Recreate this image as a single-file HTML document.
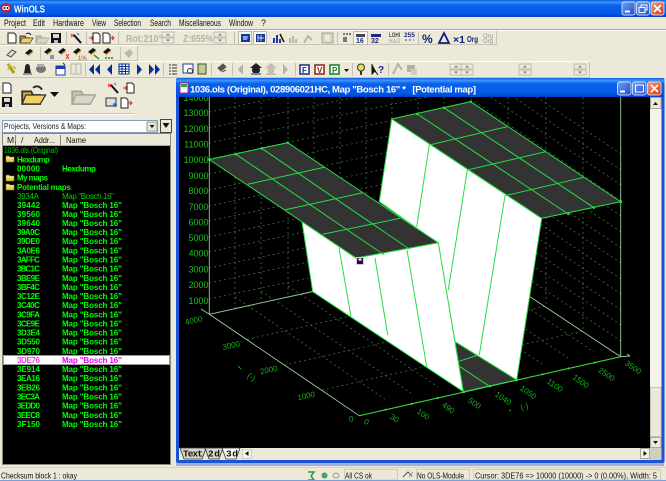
<!DOCTYPE html>
<html><head><meta charset="utf-8"><title>WinOLS</title>
<style>
html,body{margin:0;padding:0;background:#ece9d8;width:666px;height:481px;overflow:hidden}
svg{display:block;font-family:"Liberation Sans",sans-serif}
.l{font-size:8px;fill:#0f0;font-weight:bold;letter-spacing:.1px}
.n{font-size:8px;fill:#0c0}
.m{font-size:9px;fill:#111}
.v{font-size:9px;fill:#17c617}
.f{font-size:8px;fill:#17b017;text-anchor:middle}
.s{font-size:8.5px;fill:#111}
</style></head><body>
<svg width="666" height="481" viewBox="0 0 666 481" xmlns="http://www.w3.org/2000/svg">
<defs>
<linearGradient id="tb" x1="0" y1="0" x2="0" y2="1"><stop offset="0" stop-color="#0a5ae0"/><stop offset=".12" stop-color="#3d95ff"/><stop offset=".3" stop-color="#0a62ec"/><stop offset=".8" stop-color="#0058e6"/><stop offset="1" stop-color="#0040c8"/></linearGradient>
<linearGradient id="cb" x1="0" y1="0" x2="1" y2="1"><stop offset="0" stop-color="#f09a80"/><stop offset="1" stop-color="#d23c18"/></linearGradient>
<linearGradient id="bb" x1="0" y1="0" x2="1" y2="1"><stop offset="0" stop-color="#6d9cf5"/><stop offset="1" stop-color="#1f4fd0"/></linearGradient>
<clipPath id="plot"><rect x="179" y="97" width="471" height="351"/></clipPath>
<g id="doc"><path d="M-4-5H2L4-3V5H-4Z" fill="#fff" stroke="#222"/></g>
<g id="open"><path d="M-6-2H-1L0 0H4V5H-6Z" fill="#c8a838" stroke="#333"/><path d="M-6 5L-4 0H7L4 5Z" fill="#f0d060" stroke="#333" stroke-width=".7"/><path d="M0-4Q3-6 5-3" fill="none" stroke="#222"/></g>
<g id="gopen"><path d="M-6-2H-1L0 0H4V5H-6Z" fill="#c8c6b8" stroke="#a5a396"/><path d="M-6 5L-4 0H7L4 5Z" fill="#d8d6c8" stroke="#a5a396" stroke-width=".7"/></g>
<g id="save"><rect x="-5" y="-5" width="10" height="10" fill="#111"/><rect x="-3" y="-4" width="6" height="4" fill="#d8d8d8"/><rect x="-2" y="2" width="4" height="3" fill="#bbb"/></g>
<g id="wand"><path d="M-2-3L5 5" stroke="#111" stroke-width="2"/><path d="M-5-1L-2-4M-5-4L-2-1" stroke="#d33" stroke-width="1"/><path d="M1-5L3-3" stroke="#28b" stroke-width="1.2"/></g>
<g id="nl"><path d="M-2-5H3L5-3V5H-2Z" fill="#fff" stroke="#222"/><path d="M-6 0H-1M-3-2V2" stroke="#c33" stroke-width="1"/></g>
<g id="nr"><path d="M-5-5H0L2-3V5H-5Z" fill="#fff" stroke="#222"/><path d="M2 0H6M4-2L6 0L4 2" stroke="#c33" fill="none"/></g>
<g id="k"><path d="M-5 1L0-3L3-1L-2 3Z" fill="#111"/><path d="M-2 4L3 0" stroke="#d8b040" stroke-width="1.2"/></g>
<g id="spin"><rect x="-6" y="-6" width="12" height="5" fill="#ece9d8" stroke="#aaa69a" stroke-width=".6"/><rect x="-6" y="0" width="12" height="5" fill="#ece9d8" stroke="#aaa69a" stroke-width=".6"/><path d="M-2-2.5H2L0-4.5ZM-2 1.5H2L0 3.5Z" fill="#777"/></g>
<g id="fold"><path d="M-4-3H-1L0-2H4V3H-4Z" fill="#e8d040" stroke="#8a7a20" stroke-width=".6"/><path d="M-4-1H4" stroke="#fff" stroke-width=".8"/></g>
</defs>
<rect width="666" height="481" fill="#ece9d8"/>

<!-- main title -->
<rect width="666" height="17" fill="url(#tb)"/>
<circle cx="6" cy="8" r="5" fill="#c02040"/><circle cx="4.5" cy="8" r="2" fill="#fff"/><circle cx="7.5" cy="8" r="2" fill="#fff"/><circle cx="4.5" cy="8" r="1" fill="#222"/><circle cx="7.5" cy="8" r="1" fill="#222"/>
<text x="14" y="12.5" font-size="10.5" font-weight="bold" fill="#fff" textLength="31" lengthAdjust="spacingAndGlyphs">WinOLS</text>
<rect x="622" y="2" width="13" height="13" rx="2" fill="url(#bb)" stroke="#fff" stroke-width=".7"/><rect x="625" y="10.5" width="5" height="2" fill="#fff"/>
<rect x="636.5" y="2" width="13" height="13" rx="2" fill="url(#bb)" stroke="#fff" stroke-width=".7"/><rect x="641" y="5" width="6" height="5" fill="none" stroke="#fff"/><rect x="639" y="7.5" width="6" height="5" fill="#3f6fe0" stroke="#fff"/>
<rect x="651" y="2" width="13" height="13" rx="2" fill="url(#cb)" stroke="#fff" stroke-width=".7"/><path d="M654 5L661 12M661 5L654 12" stroke="#fff" stroke-width="1.6"/>

<!-- menu -->
<g>
<text class="m" x="4" y="26" textLength="22" lengthAdjust="spacingAndGlyphs">Project</text>
<text class="m" x="33" y="26" textLength="12" lengthAdjust="spacingAndGlyphs">Edit</text>
<text class="m" x="53" y="26" textLength="31" lengthAdjust="spacingAndGlyphs">Hardware</text>
<text class="m" x="92" y="26" textLength="14" lengthAdjust="spacingAndGlyphs">View</text>
<text class="m" x="114" y="26" textLength="27" lengthAdjust="spacingAndGlyphs">Selection</text>
<text class="m" x="150" y="26" textLength="21" lengthAdjust="spacingAndGlyphs">Search</text>
<text class="m" x="179" y="26" textLength="42" lengthAdjust="spacingAndGlyphs">Miscellaneous</text>
<text class="m" x="229" y="26" textLength="24" lengthAdjust="spacingAndGlyphs">Window</text>
<text class="m" x="261" y="26">?</text>
</g>
<path d="M0 30.5H666" stroke="#fff"/><path d="M0 29.5H666" stroke="#aca899"/>
<path d="M0 45.5H137M0 61.5H590" stroke="#fff"/><path d="M0 44.5H496M0 60.5H137" stroke="#c8c5b4"/><path d="M0 77.5H590" stroke="#c8c5b4"/>
<path d="M496.5 31V45M137.5 46V61M589.5 62V77" stroke="#c8c5b4"/>

<!-- toolbar row 1 -->
<use href="#doc" x="12" y="38"/><use href="#open" x="26" y="38"/><use href="#gopen" x="42" y="38"/><use href="#save" x="56" y="38"/><use href="#wand" x="76" y="38"/><use href="#nl" x="95" y="38"/><use href="#nr" x="108" y="38"/>
<path d="M66.5 32V44M86.5 32V44M118.5 32V44M234.5 32V44M337.5 32V44M418.5 32V44" stroke="#c4c1b0"/>
<text x="126" y="42" font-size="10" font-weight="bold" fill="#b5b2a5" textLength="36" lengthAdjust="spacingAndGlyphs">Rot:210°</text><use href="#spin" x="168" y="38"/>
<text x="183" y="42" font-size="10" font-weight="bold" fill="#b5b2a5" textLength="30" lengthAdjust="spacingAndGlyphs">Z:655%</text><use href="#spin" x="220" y="38"/>
<rect x="238.5" y="31.5" width="13" height="13" fill="#f6f5ee" stroke="#bdbaa8"/><rect x="241" y="34" width="9" height="8" fill="#123a96"/><path d="M243 36H248L247 40H243Z" fill="#7aa8e0"/>
<rect x="253.5" y="31.5" width="13" height="13" fill="#f6f5ee" stroke="#bdbaa8"/><rect x="256" y="34" width="9" height="8" fill="#123a96"/><path d="M258 35V41M261 35V41M258 38H264" stroke="#cde" stroke-width="1"/>
<path d="M273 43V38H275V43ZM276 43V35H278V43ZM279 43V39H281V43Z" fill="#1c3aa8"/><path d="M280 34L284 42" stroke="#111" stroke-width="1.5"/>
<path d="M289 43V38H291V43ZM292 43V36H294V43ZM295 43V39H297V43Z" fill="#b8b6a6"/><path d="M304 43L308 36L312 40" stroke="#b8b6a6" stroke-width="2" fill="none"/>
<rect x="322" y="33" width="11" height="10" fill="#d6d4c4" stroke="#aaa69a"/><path d="M325 35H330V41H325Z" fill="#ece9d8"/>
<path d="M343 33h2v2h-2zM346 33h2v2h-2zM349 33h2v2h-2zM343 37h4v5h-4z" fill="#777"/>
<rect x="353.5" y="31.5" width="14" height="13" fill="#f6f5ee" stroke="#bdbaa8"/>
<path d="M356 34h9v3h-9z" fill="#445"/><text x="356" y="43" font-size="7" font-weight="bold" fill="#1c2a80">16</text>
<path d="M371 34h10v3h-10z" fill="#1c2a80"/><text x="371" y="43" font-size="7" font-weight="bold" fill="#1c2a80">32</text>
<text x="389" y="37" font-size="6" font-weight="bold" fill="#444" textLength="11" lengthAdjust="spacingAndGlyphs">LOHI</text><text x="389" y="43" font-size="6" fill="#999" textLength="11" lengthAdjust="spacingAndGlyphs">HILO</text>
<text x="404" y="37" font-size="6.5" font-weight="bold" fill="#1c2a80">255</text><path d="M405 40H414" stroke="#999" stroke-dasharray="2 2" stroke-width="2"/>
<text x="422" y="43" font-size="12" font-weight="bold" fill="#0b1f80">%</text>
<path d="M444 33L449 43H439Z" fill="none" stroke="#0b1f80" stroke-width="1.8"/>
<text x="453" y="43" font-size="10" font-weight="bold" fill="#0b1f80" textLength="12" lengthAdjust="spacingAndGlyphs">×1</text>
<text x="467" y="42" font-size="8.5" font-weight="bold" fill="#0b1f80" textLength="11" lengthAdjust="spacingAndGlyphs">Org</text>
<text x="483" y="38" font-size="6" fill="#999">Org</text><text x="483" y="43" font-size="6" fill="#999">Org</text>

<!-- toolbar row 2 -->
<path d="M7 55L12 50L16 52L11 57Z" fill="#ddd" stroke="#555"/>
<use href="#k" x="30" y="52"/>
<use href="#k" x="49" y="51"/><path d="M50 56h4M50 58h4" stroke="#1c3aa8"/>
<use href="#k" x="63" y="51"/><path d="M66 54L69 59M69 54L66 59" stroke="#d33"/>
<use href="#k" x="78" y="51"/><text x="78" y="60" font-size="6" fill="#c33">1%</text>
<use href="#k" x="93" y="51"/><path d="M94 55L99 59" stroke="#281" stroke-width="1.3"/>
<use href="#k" x="108" y="51"/><path d="M105 58H113" stroke="#281" stroke-width="1.5" stroke-dasharray="2 1"/>
<path d="M124 53L130 49L133 53L129 58Z" fill="#bcb9aa"/>
<path d="M40.5 47V60M120.5 47V60" stroke="#c4c1b0"/>

<!-- toolbar row 3 -->
<path d="M8 64L14 73" stroke="#a8a020" stroke-width="3"/><path d="M8 70L10 64M13 66L16 69" stroke="#c8c030" stroke-width="1.5"/>
<path d="M24 73H31L30 68Q30 64 27.5 64Q25 64 25 68Z" fill="#222"/><rect x="23" y="73" width="9" height="2" fill="#a88"/>
<ellipse cx="41" cy="69" rx="5" ry="4" fill="#777"/><rect x="37" y="64" width="7" height="3" fill="#aaa"/>
<rect x="56" y="66" width="9" height="9" fill="#fff" stroke="#1c3aa8"/><rect x="56" y="66" width="9" height="3" fill="#1c3aa8"/><path d="M63 63L65 65" stroke="#333"/>
<rect x="71" y="64" width="10" height="10" fill="none" stroke="#b5b3a4"/><path d="M76 64V74" stroke="#b5b3a4"/>
<path d="M94 64L89 69.5L94 75ZM100 64L95 69.5L100 75Z" fill="#0b2f90"/>
<path d="M112 64L107 69.5L112 75Z" fill="#0b2f90"/>
<rect x="119" y="64" width="10" height="10" fill="#fff" stroke="#0b2f90"/><path d="M119 66.5H129M119 69H129M119 71.5H129M122 64V74M125.5 64V74" stroke="#0b2f90"/>
<path d="M137 64L142 69.5L137 75Z" fill="#0b2f90"/>
<path d="M149 64L154 69.5L149 75ZM155 64L160 69.5L155 75Z" fill="#0b2f90"/>
<path d="M169 65h2M172 65h5M169 68h2M172 68h5M169 71h2M172 71h5M169 74h2M172 74h5" stroke="#333"/>
<rect x="183" y="64" width="10" height="9" fill="#fff" stroke="#1c3aa8"/><circle cx="190" cy="71" r="2.5" fill="none" stroke="#333"/>
<rect x="198" y="64" width="8" height="10" fill="#c8c8a0" stroke="#2a5a2a"/>
<path d="M218 68L223 64L226 67L221 71ZM222 72L226 70" fill="#555" stroke="#555"/>
<path d="M85.5 63V76M163.5 63V76M211.5 63V76M232.5 63V76M295.5 63V76M352.5 63V76M388.5 63V76" stroke="#c4c1b0"/>
<path d="M243 64L238 69.5L243 75Z" fill="#b5b3a4"/>
<path d="M250 68L256 63L262 68Z" fill="#222"/><circle cx="256" cy="70" r="3.5" fill="#123" stroke="#222"/><rect x="251" y="73" width="10" height="2" fill="#888"/>
<path d="M265 68L271 63L277 68Z" fill="#c4c1b0"/><circle cx="271" cy="70" r="3.5" fill="#c4c1b0"/><rect x="266" y="73" width="10" height="2" fill="#c4c1b0"/>
<path d="M283 64L288 69.5L283 75Z" fill="#b5b3a4"/>
<rect x="300" y="65" width="9" height="9" fill="#fff" stroke="#1c2a80" stroke-width="1.5"/><text x="302" y="73" font-size="8" font-weight="bold" fill="#1c2a80">F</text>
<rect x="315" y="65" width="9" height="9" fill="#fff" stroke="#8a2010" stroke-width="1.5"/><text x="317" y="73" font-size="8" font-weight="bold" fill="#8a2010">V</text>
<rect x="330" y="65" width="9" height="9" fill="#fff" stroke="#1a7a20" stroke-width="1.5"/><text x="332" y="73" font-size="8" font-weight="bold" fill="#1a7a20">P</text>
<path d="M344 69H349L346.5 72Z" fill="#111"/>
<circle cx="361" cy="67.5" r="3.5" fill="#e8e050" stroke="#333"/><path d="M361 71V75" stroke="#333" stroke-width="2"/>
<path d="M372 64V74L375 71L378 75" fill="#111" stroke="#111"/><text x="378" y="73" font-size="10" font-weight="bold" fill="#1c2a80">?</text>
<path d="M393 74L398 64L402 70" stroke="#b5b3a4" stroke-width="2" fill="none"/><rect x="407" y="65" width="8" height="7" fill="#b5b3a4"/><rect x="411" y="69" width="6" height="6" fill="#cfcdbc"/>
<use href="#spin" x="456" y="70"/><use href="#spin" x="467" y="70"/><use href="#spin" x="525" y="70"/><use href="#spin" x="580" y="70"/>

<!-- left panel toolbar -->
<use href="#doc" x="7" y="88"/><use href="#save" x="7" y="102"/>
<g transform="translate(33,95) scale(1.8)"><use href="#open"/></g>
<path d="M50 92H59L54.5 97Z" fill="#111"/>
<g transform="translate(83,95) scale(1.8)"><use href="#gopen"/></g>
<use href="#wand" x="113" y="88"/><use href="#nl" x="129" y="88"/>
<rect x="106" y="98" width="10" height="8" fill="#ddd" stroke="#333"/><circle cx="115" cy="105" r="2" fill="#2868b8"/><use href="#nr" x="126" y="103"/>
<path d="M0 113.5H134" stroke="#c8c5b4"/><path d="M0 114.5H134" stroke="#fff"/>
<rect x="2.5" y="120.5" width="155" height="12" fill="#fff" stroke="#7f9db9"/>
<text x="4" y="129" font-size="8.5" fill="#222" textLength="82" lengthAdjust="spacingAndGlyphs">Projects, Versions &amp; Maps:</text>
<rect x="147" y="122" width="10" height="9" fill="#e8e6d8" stroke="#999"/><path d="M149.5 125H154.5L152 128Z" fill="#111"/>
<rect x="160.5" y="119.5" width="11" height="13" fill="#ece9d8" stroke="#444"/><path d="M162.5 123H169.5L166 128Z" fill="#111"/>
<rect x="3" y="134" width="167" height="12" fill="#ece9d8"/>
<path d="M3 145.5H170" stroke="#aca899"/><path d="M15.5 135V145M60.5 135V145" stroke="#8a8878"/>
<text class="s" x="7" y="143">M.</text><text class="s" x="21" y="143">/</text><text class="s" x="34" y="143" textLength="21" lengthAdjust="spacingAndGlyphs">Addr...</text><text class="s" x="66" y="143" textLength="20" lengthAdjust="spacingAndGlyphs">Name</text>

<!-- list -->
<rect x="3" y="146" width="167" height="318" fill="#000"/>
<rect x="2.5" y="133.5" width="168" height="331" fill="none" stroke="#8a8878"/>
<rect x="3" y="355.5" width="167" height="9.5" fill="#fff"/><rect x="3.5" y="355.5" width="166" height="9" fill="none" stroke="#999"/>
<text class="n" x="4" y="153" textLength="54" lengthAdjust="spacingAndGlyphs">1036.ols (Original)</text>
<use href="#fold" x="10" y="159"/><use href="#fold" x="10" y="178"/><use href="#fold" x="10" y="187"/>
<text class="l" x="17" y="162.5" textLength="33">Hexdump</text>
<text class="l" x="17" y="171.5" textLength="23">00000</text><text class="l" x="62" y="171.5" textLength="34">Hexdump</text>
<text class="l" x="17" y="180.5" textLength="31">My maps</text>
<text class="l" x="17" y="190" textLength="54">Potential maps</text>
<text class="n" x="17" y="199" textLength="22">3934A</text><text class="n" x="62" y="199" textLength="52">Map "Bosch 16"</text>
<g>
<text class="l" x="17" y="208" textLength="23">39442</text><text class="l" x="62" y="208" textLength="60">Map "Bosch 16"</text>
<text class="l" x="17" y="217" textLength="23">39560</text><text class="l" x="62" y="217" textLength="60">Map "Bosch 16"</text>
<text class="l" x="17" y="226" textLength="23">39640</text><text class="l" x="62" y="226" textLength="60">Map "Bosch 16"</text>
<text class="l" x="17" y="235" textLength="23">39A0C</text><text class="l" x="62" y="235" textLength="60">Map "Bosch 16"</text>
<text class="l" x="17" y="244" textLength="23">39DE0</text><text class="l" x="62" y="244" textLength="60">Map "Bosch 16"</text>
<text class="l" x="17" y="253.4" textLength="23">3A0E6</text><text class="l" x="62" y="253.4" textLength="60">Map "Bosch 16"</text>
<text class="l" x="17" y="262.6" textLength="23">3AFFC</text><text class="l" x="62" y="262.6" textLength="60">Map "Bosch 16"</text>
<text class="l" x="17" y="271.7" textLength="23">3BC1C</text><text class="l" x="62" y="271.7" textLength="60">Map "Bosch 16"</text>
<text class="l" x="17" y="280.8" textLength="23">3BE9E</text><text class="l" x="62" y="280.8" textLength="60">Map "Bosch 16"</text>
<text class="l" x="17" y="290" textLength="23">3BF4C</text><text class="l" x="62" y="290" textLength="60">Map "Bosch 16"</text>
<text class="l" x="17" y="299" textLength="23">3C12E</text><text class="l" x="62" y="299" textLength="60">Map "Bosch 16"</text>
<text class="l" x="17" y="308" textLength="23">3C40C</text><text class="l" x="62" y="308" textLength="60">Map "Bosch 16"</text>
<text class="l" x="17" y="317.3" textLength="23">3C9FA</text><text class="l" x="62" y="317.3" textLength="60">Map "Bosch 16"</text>
<text class="l" x="17" y="326.5" textLength="23">3CE9E</text><text class="l" x="62" y="326.5" textLength="60">Map "Bosch 16"</text>
<text class="l" x="17" y="335.6" textLength="23">3D3E4</text><text class="l" x="62" y="335.6" textLength="60">Map "Bosch 16"</text>
<text class="l" x="17" y="344.7" textLength="23">3D550</text><text class="l" x="62" y="344.7" textLength="60">Map "Bosch 16"</text>
<text class="l" x="17" y="353.9" textLength="23">3D970</text><text class="l" x="62" y="353.9" textLength="60">Map "Bosch 16"</text>
<text class="l" x="17" y="363" textLength="23" style="fill:#e040e0">3DE76</text><text class="l" x="62" y="363" textLength="60" style="fill:#f000f0">Map "Bosch 16"</text>
<text class="l" x="17" y="372" textLength="23">3E914</text><text class="l" x="62" y="372" textLength="60">Map "Bosch 16"</text>
<text class="l" x="17" y="381" textLength="23">3EA16</text><text class="l" x="62" y="381" textLength="60">Map "Bosch 16"</text>
<text class="l" x="17" y="390.5" textLength="23">3EB26</text><text class="l" x="62" y="390.5" textLength="60">Map "Bosch 16"</text>
<text class="l" x="17" y="399.5" textLength="23">3EC3A</text><text class="l" x="62" y="399.5" textLength="60">Map "Bosch 16"</text>
<text class="l" x="17" y="408.6" textLength="23">3EDD0</text><text class="l" x="62" y="408.6" textLength="60">Map "Bosch 16"</text>
<text class="l" x="17" y="417.8" textLength="23">3EEC8</text><text class="l" x="62" y="417.8" textLength="60">Map "Bosch 16"</text>
<text class="l" x="17" y="427" textLength="23">3F150</text><text class="l" x="62" y="427" textLength="60">Map "Bosch 16"</text>
</g>

<!-- MDI window -->
<rect x="176" y="78" width="488.5" height="385" rx="2" fill="#1a52d8"/>
<rect x="176" y="78" width="488.5" height="19" rx="2" fill="url(#tb)"/>
<rect x="176" y="463" width="488" height="3" fill="#a0aed8"/>
<rect x="180" y="83" width="8" height="10" fill="#fff" stroke="#a03080"/><rect x="181" y="84" width="6" height="3" fill="#40a040"/>
<text x="190" y="92.5" font-size="9.5" font-weight="bold" fill="#fff" textLength="286" style="white-space:pre">1036.ols (Original), 028906021HC, Map "Bosch 16" *   [Potential map]</text>
<rect x="617.5" y="82" width="13.5" height="13" rx="2" fill="url(#bb)" stroke="#fff" stroke-width=".7"/><rect x="620" y="90.5" width="5" height="2" fill="#fff"/>
<rect x="632.5" y="82" width="13.5" height="13" rx="2" fill="url(#bb)" stroke="#fff" stroke-width=".7"/><rect x="635.5" y="85" width="8" height="7" fill="none" stroke="#fff"/>
<rect x="647.5" y="82" width="13.5" height="13" rx="2" fill="url(#cb)" stroke="#fff" stroke-width=".7"/><path d="M651 85L658 92M658 85L651 92" stroke="#fff" stroke-width="1.6"/>
<rect x="179" y="97" width="471" height="351" fill="#000"/>

<!-- plot -->
<g clip-path="url(#plot)">
<g fill="none" stroke="#3f6f3f" stroke-width=".8" stroke-dasharray="2 3">
<path d="M209 299L470 244M209 283L470 228M209 268L470 213M209 252L470 197M209 237L470 182M209 221L470 166M209 206L470 151M209 190L470 135M209 174L470 119M209 159L470 104M209 143L470 88M209 128L470 73M209 112L470 57"/>
<path d="M235 97V309M261 97V303M288 97V298M314 97V292M340 97V287M366 97V281M392 97V275M418 97V270M444 97V264"/>
<path d="M621 341L471 240M621 325L471 224M621 310L471 208M621 294L471 193M621 279L471 177M621 263L471 162M621 248L471 146M621 232L471 131M621 216L471 115M621 201L471 99M621 185L471 84M621 170L471 68M621 154L471 53"/>
<path d="M583 97V331M546 97V306M508 97V280"/>
<path d="M235 297L385 399M261 291L411 393M288 286L438 387M314 280L464 381M340 274L490 375M366 268L516 370M392 262L542 364M418 256L568 358M444 251L594 352"/>
<path d="M322 390L583 331M284.5 365L546 306M247 339.5L508 280"/>
</g>
<g fill="none" stroke="#9ccf9c" stroke-width=".9">
<path d="M209.3 97V314.3L359.3 415.7L620.7 356.7V97"/>
<path d="M209.3 314.3L313 291.5M530 296.7L620.7 356.7"/>
<path d="M209.3 314.3L201 309M620.7 356.7L630 356M627 354L630 356"/>
</g>
<path d="M359.3 415.7L620.7 356.7" stroke="#2fd02f" fill="none"/>

<!-- right wall + plateau -->
<path d="M391.7 119L541.7 218.3L516.7 380L455 341.7L438 243L379.3 201.7Z" fill="#fff" stroke="#25dd45" stroke-width="1"/>
<path d="M429.3 145L416.7 226.7M467.3 170L448.3 290M505 195.7L479.3 355" stroke="#25dd45" fill="none"/>
<path d="M391.7 119L470.7 101.7L620.7 201.7L541.7 218.3Z" fill="#333" stroke="#25dd45"/>
<path d="M429.3 145L507.3 126.7M467.3 170L545.7 151.7M505 195.7L584 177.3M417.3 114L568.3 214M444 107.7L594 207.7" stroke="#25dd45" fill="none"/>
<!-- floor dark -->
<path d="M455 341.7L516.7 380L463.3 391.7Z" fill="#333" stroke="#25dd45"/>
<path d="M458 361.7L478 355M460 366.7L490 386.7" stroke="#25dd45" fill="none"/>
<!-- left wall + plateau -->
<path d="M302 221.7L312.7 291.7L463.3 391.7L438.3 242.7L356 258Z" fill="#fff" stroke="#25dd45"/>
<path d="M339 247.7L351 316.7M375 258L387.7 335M407 250L426.7 366.7" stroke="#25dd45" fill="none"/>
<path d="M209.3 159.5L287.7 142.7L438.3 242.7L356 258Z" fill="#333" stroke="#25dd45"/>
<path d="M247.7 184.3L324.3 167.3M285.3 209.7L362.7 192.7M322.7 234.3L400 218.3M236 154.3L384.3 255M261.7 148.3L409.3 249" stroke="#25dd45" fill="none"/>
<g fill="#2bf02b">
<circle cx="209.3" cy="159.5" r="1.3"/><circle cx="235.7" cy="154.3" r="1.2"/><circle cx="261.7" cy="148.3" r="1.2"/><circle cx="287.7" cy="142.7" r="1.2"/>
<circle cx="417.3" cy="114" r="1.2"/><circle cx="444" cy="107.7" r="1.2"/><circle cx="470.7" cy="101.7" r="1.2"/><circle cx="620.7" cy="201.7" r="1.3"/><circle cx="568.3" cy="214" r="1.2"/><circle cx="594" cy="207.7" r="1.2"/>
<circle cx="385.4" cy="409.8" r="1"/><circle cx="411.6" cy="403.9" r="1"/><circle cx="437.7" cy="398" r="1"/><circle cx="463.9" cy="392.1" r="1"/><circle cx="490" cy="386.2" r="1.2"/><circle cx="516.7" cy="380" r="1.2"/><circle cx="542.3" cy="374.4" r="1"/><circle cx="568.4" cy="368.5" r="1"/><circle cx="594.6" cy="362.6" r="1"/>
</g>
<rect x="356.5" y="257.5" width="7" height="7" fill="#2a1030" stroke="#e8c8e8"/><rect x="358.5" y="258.5" width="3" height="2" fill="#fff"/>

<!-- axis labels -->
<g text-anchor="end">
<text class="v" x="208.5" y="101">14000</text><text class="v" x="208.5" y="116">13000</text><text class="v" x="208.5" y="132">12000</text><text class="v" x="208.5" y="147.5">11000</text><text class="v" x="208.5" y="163">10000</text><text class="v" x="208.5" y="179">9000</text><text class="v" x="208.5" y="194">8000</text><text class="v" x="208.5" y="210">7000</text><text class="v" x="208.5" y="225.5">6000</text><text class="v" x="208.5" y="241">5000</text><text class="v" x="208.5" y="256.5">4000</text><text class="v" x="208.5" y="272.5">3000</text><text class="v" x="208.5" y="288">2000</text><text class="v" x="208.5" y="304">1000</text>
</g>
<text class="f" transform="translate(194.3,323) rotate(-12)">4000</text>
<text class="f" transform="translate(231.7,348) rotate(-12)">3000</text>
<text class="f" transform="translate(269.3,372.5) rotate(-12)">2000</text>
<text class="f" transform="translate(306.7,398.5) rotate(-12)">1000</text>
<text class="f" transform="translate(351.7,421.5) rotate(-12)">0</text>
<text class="f" transform="translate(250,379) rotate(35)">(-)</text>
<path d="M238 366L241 369" stroke="#17a017"/>
<text class="f" transform="translate(365,424) rotate(35)">0</text>
<text class="f" transform="translate(393,420.5) rotate(35)">30</text>
<text class="f" transform="translate(421.7,416.5) rotate(35)">100</text>
<text class="f" transform="translate(446.7,410) rotate(35)">490</text>
<text class="f" transform="translate(473,405.5) rotate(35)">500</text>
<text class="f" transform="translate(501.7,400.5) rotate(35)">1040</text>
<text class="f" transform="translate(526.7,394.5) rotate(35)">1050</text>
<text class="f" transform="translate(553.3,387.5) rotate(35)">1100</text>
<text class="f" transform="translate(579.3,383.5) rotate(35)">1500</text>
<text class="f" transform="translate(605,376.5) rotate(35)">2500</text>
<text class="f" transform="translate(631.7,369.5) rotate(35)">3500</text>
<text class="f" transform="translate(525,409) rotate(-15)">(-)</text>
<path d="M509 410L511 411" stroke="#17a017"/>
</g>

<!-- scrollbars -->
<rect x="650" y="97" width="11.5" height="351" fill="#f4f3ea"/>
<rect x="650.5" y="97.5" width="10.5" height="11" fill="#ece9d8" stroke="#aca899"/><path d="M653 105H658L655.5 102Z" fill="#111"/>
<rect x="650.5" y="387.5" width="10.5" height="49" fill="#ece9d8" stroke="#c8c5b4"/>
<rect x="650.5" y="437.5" width="10.5" height="10" fill="#ece9d8" stroke="#aca899"/><path d="M653 441H658L655.5 444Z" fill="#111"/>
<rect x="179" y="448" width="482.5" height="12" fill="#ece9d8"/>
<rect x="650" y="448" width="11.5" height="12" fill="#d0cec0"/>
<rect x="640.5" y="448.5" width="9" height="10" fill="#f4f3ea" stroke="#aca899"/><path d="M643.5 451V456L647 453.5Z" fill="#111"/>
<path d="M180 448L184 459H202L206 448Z" fill="#d8d6c8" stroke="#333" stroke-width=".8"/>
<path d="M205 448L209 459H219L223 448Z" fill="#d8d6c8" stroke="#333" stroke-width=".8"/>
<path d="M222 448L226 459H236L240 448Z" fill="#f8f7f0" stroke="#333" stroke-width=".8"/>
<g font-family="Liberation Mono,monospace" font-weight="bold" font-size="9.5" fill="#111">
<text x="183" y="456.5" textLength="20">Text</text><text x="208" y="456.5" textLength="12">2d</text><text x="226" y="456.5" textLength="12">3d</text>
</g>
<rect x="242.5" y="449.5" width="9" height="9" fill="#f4f3ea" stroke="#ccc"/><path d="M248.5 451V456L245 453.5Z" fill="#111"/>

<!-- status bar -->
<path d="M0 467.5H666" stroke="#d6d3c3"/>
<text class="s" x="1" y="478.5" textLength="76" lengthAdjust="spacingAndGlyphs">Checksum block 1 : okay</text>
<path d="M308 472H314L311 476L314 480H308" fill="none" stroke="#2a9a4a" stroke-width="1.5"/>
<circle cx="324.5" cy="475.5" r="3" fill="#4aa060"/>
<ellipse cx="336" cy="475.5" rx="3" ry="2.5" fill="none" stroke="#999"/>
<rect x="344.5" y="469.5" width="53" height="10.5" fill="none" stroke="#cfccbc"/>
<text class="s" x="345" y="478.5" textLength="27" lengthAdjust="spacingAndGlyphs">All CS ok</text>
<path d="M403 477L408 472L412 476" stroke="#555" fill="none"/><path d="M409 477L413 472" stroke="#999"/>
<rect x="416.5" y="469.5" width="53" height="10.5" fill="none" stroke="#cfccbc"/>
<text class="s" x="417" y="478.5" textLength="47" lengthAdjust="spacingAndGlyphs">No OLS-Module</text>
<rect x="473.5" y="469.5" width="187" height="10.5" fill="none" stroke="#cfccbc"/>
<text class="s" x="475" y="478.5" textLength="182" lengthAdjust="spacingAndGlyphs">Cursor: 3DE76 =&gt; 10000 (10000) -&gt; 0 (0.00%), Width: 5</text>
<rect x="0" y="480" width="666" height="1" fill="#7aa0e0"/>
</svg>
</body></html>
